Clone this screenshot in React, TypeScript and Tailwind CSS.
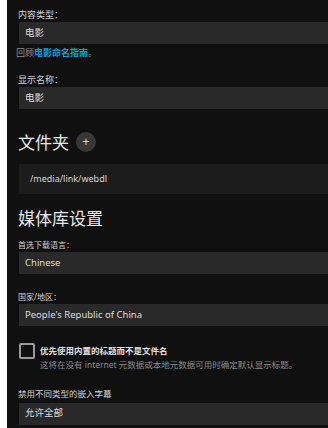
import React from "react";

const cjk = { fontFamily: '"Noto Sans", "Noto Sans CJK SC", sans-serif' };

function Field({ label, value, labelSize = "text-[9px]", gap = "mb-[3px]" }: { label: string; value: string; labelSize?: string; gap?: string }) {
  return (
    <div>
      <div className={`${labelSize} ${gap} text-[#d0d0d0] leading-none`}>{label}</div>
      <div className="h-[22px] bg-[#292929] flex items-center pl-[6px] text-[9.5px] text-[#dcdcdc] ml-[1px]">{value}</div>
    </div>
  );
}

export default function App() {
  return (
    <div className="w-[328px] h-[428px] bg-white overflow-hidden flex" style={cjk}>
      <div className="ml-[7px] flex-1 bg-[#101010] pl-[11px] pt-[10px]">
        <Field label="内容类型：" value="电影" />
        <div className="text-[9px] mt-[4px] text-[#8a8a8a] leading-none -ml-[2px]">
          回顾<span className="text-[#00a4dc] font-bold">电影命名指南</span>。
        </div>
        <div className="mt-[18px]">
          <Field label="显示名称：" value="电影" />
        </div>

        <div className="mt-[23px] flex items-center gap-[7px]">
          <h2 className="text-[17px] text-[#e8e8e8] leading-none">文件夹</h2>
          <div className="w-[20px] h-[20px] rounded-full bg-[#383838] flex items-center justify-center text-[#ddd] text-[12px] leading-none">+</div>
        </div>
        <div className="mt-[12px] ml-[1px] h-[30px] bg-[#1c1c1c] flex items-center pl-[11px] text-[9px] text-[#d6d6d6]">/media/link/webdl</div>

        <h2 className="mt-[16px] text-[17px] text-[#e8e8e8] leading-none">媒体库设置</h2>
        <div className="mt-[14px]">
          <Field label="首选下载语言：" value="Chinese" labelSize="text-[8px]" />
        </div>
        <div className="mt-[19px]">
          <Field label="国家/地区：" value="People's Republic of China" labelSize="text-[8px]" />
        </div>

        <div className="mt-[17px] flex gap-[5px]">
          <div className="w-[16px] h-[16px] border-2 border-[#9a9a9a] rounded-[2px] ml-[1px] shrink-0" />
          <div className="pt-[4px]">
            <div className="text-[8.5px] text-[#e0e0e0] font-semibold leading-none">优先使用内置的标题而不是文件名</div>
            <div className="text-[8.5px] text-[#8a8a8a] leading-none mt-[5px] whitespace-nowrap">这将在没有 internet 元数据或本地元数据可用时确定默认显示标题。</div>
          </div>
        </div>

        <div className="mt-[21px]">
          <Field label="禁用不同类型的嵌入字幕" value="允许全部" labelSize="text-[8.5px]" gap="mb-[4px]" />
        </div>
      </div>
    </div>
  );
}
